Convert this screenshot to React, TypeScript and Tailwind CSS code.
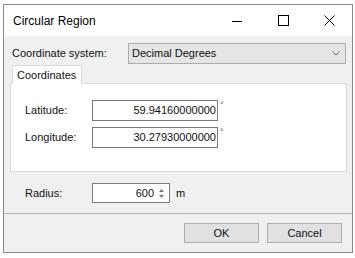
import React from 'react'

const font = { fontFamily: '"Liberation Sans", Arial, sans-serif' }

function CoordRow({ label, value }: { label: string; value: string }) {
    return (
        <div className='flex items-start h-[21px]'>
            <div className='w-[67px] h-[21px] flex items-center'>{label}</div>
            <div className='w-[126px] h-[21px] border border-[#7a7a7a] bg-white flex items-center justify-end pr-[1px]'>
                {value}
            </div>
            <div className='ml-[2px] text-[9px] leading-none mt-[1px] text-[#555]'>°</div>
        </div>
    )
}

function App() {
    return (
        <div className='w-[355px] h-[258px] bg-white overflow-hidden text-[11px] text-[#111]' style={font}>
            <div className='ml-[3px] mt-[4px] w-[350px] h-[249px] border border-[#8a8a8a] flex flex-col bg-[#f0f0f0]'>
                {/* title bar */}
                <div className='h-[31px] bg-white flex items-center'>
                    <div className='pl-[9px] text-[12px] text-black'>Circular Region</div>
                    <div className='ml-auto flex h-full'>
                        <div className='w-[46px] flex items-center justify-center'>
                            <svg width='10' height='10' viewBox='0 0 10 10'>
                                <line x1='0' y1='5.5' x2='10' y2='5.5' stroke='#000' strokeWidth='1' />
                            </svg>
                        </div>
                        <div className='w-[46px] flex items-center justify-center'>
                            <svg width='11' height='11' viewBox='0 0 11 11'>
                                <rect x='0.5' y='0.5' width='10' height='10' fill='none' stroke='#000' strokeWidth='1' />
                            </svg>
                        </div>
                        <div className='w-[46px] flex items-center justify-center'>
                            <svg width='11' height='11' viewBox='0 0 11 11'>
                                <path d='M0.5 0.5 L10.5 10.5 M10.5 0.5 L0.5 10.5' stroke='#000' strokeWidth='1' />
                            </svg>
                        </div>
                    </div>
                </div>

                {/* coordinate system */}
                <div className='mt-[7px] h-[21px] flex items-center'>
                    <div className='pl-[8px] w-[124px]'>Coordinate system:</div>
                    <div className='w-[218px] h-[21px] border border-[#adadad] bg-[#e5e5e5] flex items-center pl-[3px]'>
                        <span>Decimal Degrees</span>
                        <svg className='ml-auto mr-[5px]' width='8' height='5' viewBox='0 0 8 5'>
                            <path d='M0.5 0.5 L4 4 L7.5 0.5' fill='none' stroke='#666' strokeWidth='1' />
                        </svg>
                    </div>
                </div>

                {/* tab */}
                <div className='mt-[1px] flex'>
                    <div className='ml-[8px] w-[70px] h-[19px] -mb-[1px] relative z-10 bg-white border border-b-0 border-[#d9d9d9] flex items-center pl-[4px]'>
                        Coordinates
                    </div>
                </div>
                <div className='ml-[6px] w-[337px] h-[89px] bg-white border border-[#d9d9d9] pt-[16px] pl-[14px] flex flex-col gap-[6px]'>
                    <CoordRow label='Latitude:' value='59.94160000000' />
                    <CoordRow label='Longitude:' value='30.27930000000' />
                </div>

                {/* radius */}
                <div className='mt-[11px] h-[20px] flex items-center pl-[21px]'>
                    <div className='w-[67px]'>Radius:</div>
                    <div className='w-[78px] h-[20px] border border-[#7a7a7a] bg-white flex items-center justify-end'>
                        <span>600</span>
                        <div className='ml-[5px] mr-[5px] flex flex-col gap-[3px]'>
                            <svg width='5' height='3' viewBox='0 0 5 3'>
                                <path d='M0 3 L2.5 0 L5 3 Z' fill='#777' />
                            </svg>
                            <svg width='5' height='3' viewBox='0 0 5 3'>
                                <path d='M0 0 L2.5 3 L5 0 Z' fill='#777' />
                            </svg>
                        </div>
                    </div>
                    <div className='ml-[6px]'>m</div>
                </div>

                <div className='mt-[10px] border-t border-[#b5b5b5]' />

                {/* buttons */}
                <div className='mt-[9px] flex justify-end gap-[8px] pr-[10px]'>
                    <button className='w-[75px] h-[20px] bg-[#e1e1e1] border border-[#adadad] flex items-center justify-center'>
                        OK
                    </button>
                    <button className='w-[75px] h-[20px] bg-[#e1e1e1] border border-[#adadad] flex items-center justify-center'>
                        Cancel
                    </button>
                </div>
            </div>
        </div>
    )
}

export default App
